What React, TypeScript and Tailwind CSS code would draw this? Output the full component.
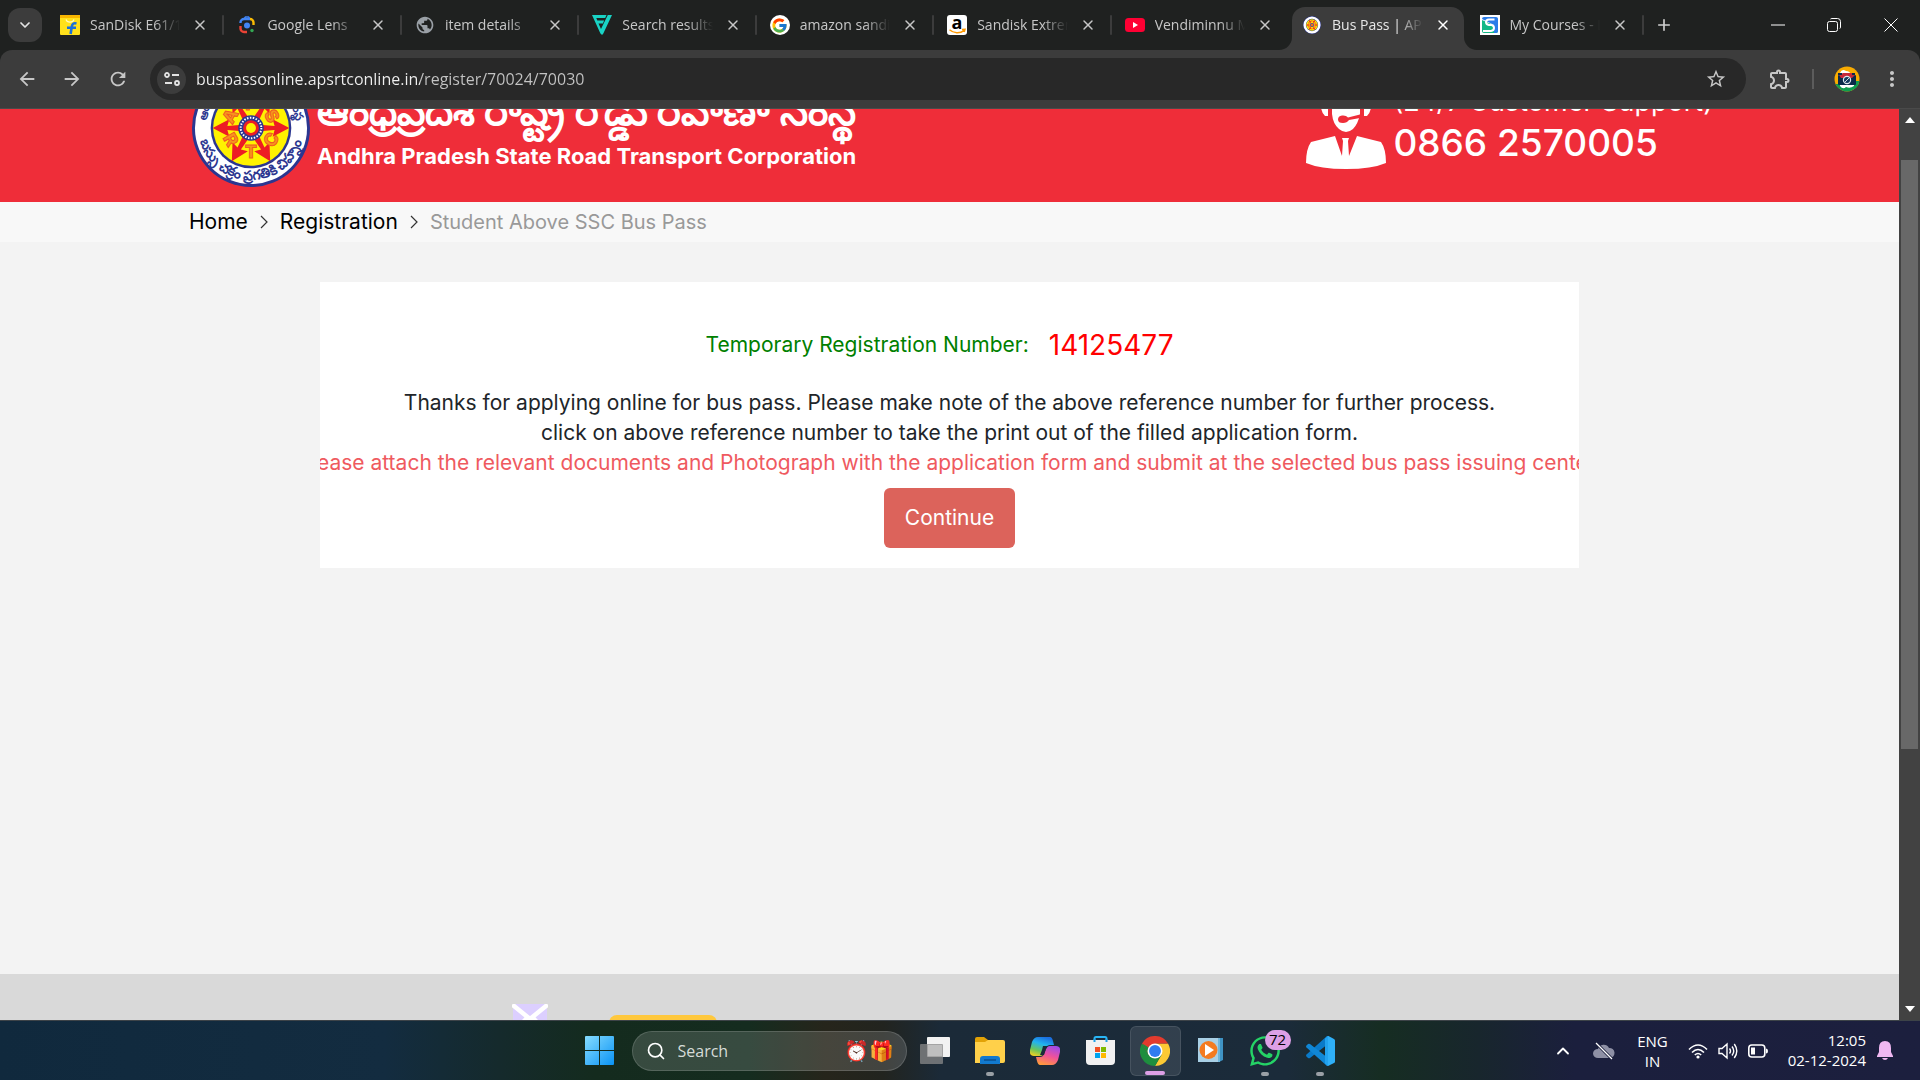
import React from "react";
import {
  MdArrowBack,
  MdArrowForward,
  MdRefresh,
  MdStarBorder,
  MdOutlineExtension,
  MdMoreVert,
  MdPublic,
} from "react-icons/md";
import { FcGoogle } from "react-icons/fc";
import { FaWhatsapp } from "react-icons/fa";
import { ChevronDown, ChevronUp, Plus, X, Search } from "lucide-react";

/* ---------- Emblem ---------- */

const SPOKES = [0, 60, 120, 180, 240, 300];
const LETTERS = [
  { ch: "A", angle: -60 },
  { ch: "P", angle: 0 },
  { ch: "S", angle: 60 },
  { ch: "C", angle: -60, flip: true },
  { ch: "T", angle: 0, flip: true },
  { ch: "R", angle: 60, flip: true },
];

function Emblem({ className, detailed }: { className: string; detailed?: boolean }) {
  return (
    <svg viewBox="0 0 120 120" className={className} aria-hidden="true">
      <circle cx="60" cy="60" r="60" fill="#2b3690" />
      <circle cx="60" cy="60" r="57" fill="#fff" />
      <circle cx="60" cy="60" r="41" fill="#2b3690" />
      <circle cx="60" cy="60" r="38.500" fill="#fff200" />
      {SPOKES.map((a) => (
        <path
          key={a}
          d="M60 56 L84 58 L82 51 L99 60 L82 69 L84 62 L60 64 Z"
          fill="#ed1c24"
          transform={`rotate(${a} 60 60)`}
        />
      ))}
      {LETTERS.map((l) => (
        <g key={l.ch} transform={`rotate(${l.angle} 60 60)`}>
          <text
            x="60"
            y={l.flip ? 90 : 42}
            textAnchor="middle"
            fontSize="18"
            fontWeight="800"
            fill="#f7941d"
            stroke="#f15a22"
            strokeWidth="1"
            className="font-['Inter',sans-serif]"
          >
            {l.ch}
          </text>
        </g>
      ))}
      <circle cx="60" cy="60" r="13" fill="#2b3690" />
      <circle cx="60" cy="60" r="10.500" fill="none" stroke="#fff" strokeWidth="2" strokeDasharray="1.500 1.500" />
      <circle cx="60" cy="60" r="8" fill="#ed1c24" />
      <circle cx="60" cy="60" r="5" fill="#fff200" />
      {detailed && (
        <>
          <path id="ringLower" d="M8 70A53 53 0 0 0 112 70" fill="none" />
          <text fontSize="14" fontWeight="700" fill="#2b3690">
            <textPath href="#ringLower" startOffset="50%" textAnchor="middle">
              బస్సు చక్రం ప్రగతికి చిహ్నం
            </textPath>
          </text>
          <path id="ringUpper" d="M14.500 66A46 46 0 1 1 105.500 66" fill="none" />
          <text fontSize="12" fontWeight="700" fill="#2b3690">
            <textPath href="#ringUpper" startOffset="50%" textAnchor="middle">
              ఆంధ్రప్రదేశ్ రోడ్డు రవాణా సంస్థ
            </textPath>
          </text>
        </>
      )}
    </svg>
  );
}

/* ---------- Favicons ---------- */

const FlipkartIcon = () => (
  <svg viewBox="0 0 20 20" className="size-5">
    <rect width="20" height="20" rx="1" fill="#ffe11b" />
    <rect width="20" height="3" fill="#f7b500" />
    <path d="M6 4.500c1 3.500 7 3.500 8 0" fill="none" stroke="#fff8c0" strokeWidth="1.200" />
    <path d="M16.500 8.500c-3-.8-4.300.4-4.700 3L10.600 19M7 12.800h9" fill="none" stroke="#1a6fdb" strokeWidth="2.600" />
  </svg>
);
const LensIcon = () => (
  <svg viewBox="0 0 20 20" className="size-5" fill="none" strokeWidth="2.400">
    <path d="M3.500 8V7.500A3.500 3.500 0 0 1 7 4h6" stroke="#4285f4" />
    <path d="M7 4l1.500-2h3L13 4" stroke="#4285f4" strokeWidth="1.600" />
    <path d="M13 4a3.500 3.500 0 0 1 3.500 3.500V10" stroke="#fbbc04" />
    <path d="M3.500 11v2.500A3.500 3.500 0 0 0 7 17h3" stroke="#ea4335" />
    <circle cx="10" cy="10.500" r="3" fill="#4285f4" />
    <circle cx="15" cy="15.500" r="1.700" fill="#34a853" />
  </svg>
);
const VIcon = () => (
  <svg viewBox="0 0 20 20" className="size-5" fill="#19d3c5">
    <path d="M0 0h14.500l-1.300 3H4.300l1 2.500h6.800L10.900 8.500H6.500L9 14 15.800 0H20L11.300 18.500Q10 21 8.300 18.300Z" />
  </svg>
);
const GoogleIcon = () => (
  <span className="flex size-5 items-center justify-center rounded-full bg-white">
    <FcGoogle className="size-[17px]" />
  </span>
);
const AmazonIcon = () => (
  <svg viewBox="0 0 20 20" className="size-5">
    <rect width="20" height="20" rx="3" fill="#fff" />
    <text x="10" y="13.500" textAnchor="middle" fontSize="18" fontWeight="700" fill="#000" className="font-['Open_Sans',sans-serif]">
      a
    </text>
    <path d="M2.500 14.800c4 3.600 10.500 3.700 14.500.8M15 14.500l3-.2-.8 2.700" fill="none" stroke="#ff9900" strokeWidth="1.500" />
  </svg>
);
const YoutubeIcon = () => (
  <svg viewBox="0 0 20 20" className="size-5">
    <rect y="3" width="20" height="14" rx="3.500" fill="#ff0033" />
    <path d="M8 7l5 3-5 3z" fill="#fff" />
  </svg>
);
const CoursesIcon = () => (
  <svg viewBox="0 0 20 20" className="size-5">
    <rect width="20" height="20" fill="#fff" />
    <path d="M2 4q0-2 2-2h12q2 0 2 2v8z" fill="#2b7de9" />
    <path d="M2 5v11q0 2 2 2h12q2 0 2-2v-4z" fill="#12b886" />
    <path d="M18 3v13q0 2-2 2h-2V9z" fill="#2b7de9" />
    <path d="M14.500 4.500H9q-3 0-3 2.500t3 3h2.500q2.500.5 2.500 3T11 16H3" fill="none" stroke="#fff" strokeWidth="2" />
  </svg>
);

type Tab = { title: string; icon: React.ReactNode; active?: boolean };

const TABS: Tab[] = [
  { title: "SanDisk E61/1050 MB/s", icon: <FlipkartIcon /> },
  { title: "Google Lens", icon: <LensIcon /> },
  { title: "item details", icon: <MdPublic className="size-5 text-[#9aa0a6]" /> },
  { title: "Search results for", icon: <VIcon /> },
  { title: "amazon sandisk", icon: <GoogleIcon /> },
  { title: "Sandisk Extreme", icon: <AmazonIcon /> },
  { title: "Vendiminnu Mabbulona", icon: <YoutubeIcon /> },
  { title: "Bus Pass | APSRTC", icon: <Emblem className="size-[18px]" />, active: true },
  { title: "My Courses - Learn", icon: <CoursesIcon /> },
];

function TabItem({ tab, beforeActive }: { tab: Tab; beforeActive: boolean }) {
  return (
    <div className="relative flex h-full min-w-0 flex-1 items-center pr-[14px] pl-[13px]">
      {tab.active && (
        <div className="absolute inset-x-0 top-[7px] bottom-0 mx-[3px] rounded-t-[13px] bg-[#3c3c3c]">
          <svg viewBox="0 0 13 13" className="absolute bottom-0 -left-[13px] size-[13px]" fill="#3c3c3c">
            <path d="M13 0V13H0A13 13 0 0 0 13 0Z" />
          </svg>
          <svg viewBox="0 0 13 13" className="absolute -right-[13px] bottom-0 size-[13px]" fill="#3c3c3c">
            <path d="M0 0V13H13A13 13 0 0 1 0 0Z" />
          </svg>
        </div>
      )}
      <button role="tab" aria-selected={!!tab.active} className="relative flex min-w-0 flex-1 items-center gap-[10px]">
        <span className="flex size-5 shrink-0 items-center justify-center">{tab.icon}</span>
        <span
          className={`min-w-0 flex-1 overflow-hidden [mask-image:linear-gradient(90deg,#000_70%,transparent_98%)] text-left text-sm whitespace-nowrap ${tab.active ? "text-[#e8e8e8]" : "text-[#c7c7c7]"}`}
        >
          {tab.title}
        </span>
      </button>
      <button
        aria-label={`Close ${tab.title}`}
        className={`relative ml-2 flex size-5 items-center justify-center ${tab.active ? "text-white" : "text-[#c7c7c7]"}`}
      >
        <X className="size-4" strokeWidth={2.2} />
      </button>
      {!tab.active && !beforeActive && <span className="absolute right-0 h-5 w-0.5 rounded bg-[#3c3c3c]" />}
    </div>
  );
}

function TabStrip() {
  return (
    <div className="flex h-[50px] bg-[#1f2120] pl-2">
      <button aria-label="Search tabs" className="mt-2 mr-[5px] flex size-[34px] shrink-0 items-center justify-center rounded-xl bg-[#3c3c3c] text-[#e3e3e3]">
        <ChevronDown className="size-4" strokeWidth={2.6} />
      </button>
      <div role="tablist" className="flex min-w-0 flex-1">
        {TABS.map((t, i) => (
          <TabItem key={t.title} tab={t} beforeActive={!!TABS[i + 1]?.active} />
        ))}
      </div>
      <button aria-label="New tab" className="flex w-10 shrink-0 items-center justify-center text-[#d0d0d0]">
        <Plus className="size-[18px]" strokeWidth={2.2} />
      </button>
      <div className="flex w-[236px] shrink-0 justify-end text-white">
        <button aria-label="Minimize" className="flex w-14 items-center justify-center">
          <svg viewBox="0 0 14 14" className="size-[14px]" stroke="currentColor"><path d="M0 7h14" /></svg>
        </button>
        <button aria-label="Restore" className="flex w-14 items-center justify-center">
          <svg viewBox="0 0 14 14" className="size-[14px]" fill="none" stroke="currentColor">
            <rect x=".5" y="3.500" width="10" height="10" rx="2" />
            <path d="M3.500 1Q4 .5 5 .5h5.500q3 0 3 3V9q0 1-.6 1.500" />
          </svg>
        </button>
        <button aria-label="Close window" className="flex w-[58px] items-center justify-center">
          <svg viewBox="0 0 14 14" className="size-[14px]" stroke="currentColor"><path d="M.5.5l13 13M13.500.5l-13 13" /></svg>
        </button>
      </div>
    </div>
  );
}

function Toolbar() {
  return (
    <div className="bg-[#1f2120]">
      <div className="flex h-[59px] items-center rounded-t-xl border-b border-[#4a4a4a] bg-[#3c3c3c] pl-4 text-[#c7c7c7]">
        <button aria-label="Back" className="mr-[23px]"><MdArrowBack className="size-[22px]" /></button>
        <button aria-label="Forward" className="mr-6"><MdArrowForward className="size-[22px]" /></button>
        <button aria-label="Reload" className="mr-[21px]"><MdRefresh className="size-[22px]" /></button>
        <div className="flex h-[42px] flex-1 items-center rounded-full bg-[#282828] pr-[19px] pl-[7px]">
          <button aria-label="View site information" className="flex size-[29px] items-center justify-center rounded-full bg-[#3c3c3c]">
            <svg viewBox="0 0 16 16" className="size-4" fill="none" stroke="#e3e3e3" strokeWidth="1.800">
              <circle cx="3" cy="4" r="2" />
              <path d="M8 4h7M1 12h7" />
              <circle cx="13" cy="12" r="2" />
            </svg>
          </button>
          <input
            aria-label="Address"
            readOnly
            value="buspassonline.apsrtconline.in/register/70024/70030"
            className="ml-[10px] min-w-0 flex-1 bg-[linear-gradient(90deg,#f0f0f0_224px,#c4c4c4_224px)] bg-clip-text text-base text-transparent outline-none"
          />
          <button aria-label="Bookmark this tab"><MdStarBorder className="size-[22px]" /></button>
        </div>
        <button aria-label="Extensions" className="ml-[22px]"><MdOutlineExtension className="size-6" /></button>
        <span className="ml-5 h-5 w-0.5 bg-[#5c5c5c]" />
        <button aria-label="Profile" className="ml-5">
          <svg viewBox="0 0 26 26" className="size-[26px]">
            <clipPath id="avatarClip"><circle cx="13" cy="13" r="12.500" /></clipPath>
            <g clipPath="url(#avatarClip)">
              <rect width="26" height="26" fill="#f9ab00" />
              <path d="M0 18h26v8H0z" fill="#0f9d4f" />
              <path d="M20 15h6v8h-6z" fill="#0f9d4f" />
              <path d="M6 7q2-5 6-2 4 0 5 4H5zM6 20q3 4 6 1 4 2 8-1v-3H6z" fill="#fff" />
              <rect x="4" y="9" width="18" height="10" rx="1" fill="#0b2a4a" />
              <path d="M9 7h9l3 2-3 3H7l-2-3z" fill="#c6283a" />
              <path d="M4 7h4v2H4zM18 7h3v2h-3z" fill="#0b2a4a" />
              <circle cx="13" cy="14" r="4.200" fill="#dfe6ee" />
              <circle cx="13" cy="14" r="3" fill="#12395f" />
              <path d="M11 16l4-4" stroke="#fff" strokeWidth=".8" />
            </g>
          </svg>
        </button>
        <button aria-label="Menu" className="mr-4 ml-5"><MdMoreVert className="size-6" /></button>
      </div>
    </div>
  );
}

/* ---------- Page ---------- */

const SupportAgent = () => (
  <svg viewBox="0 0 80 80" className="size-20" fill="#fff" aria-hidden="true">
    <path d="M15 8h7v19h-3q-4-4-4-10zM65 8h-7v19h3q4-4 4-10z" />
    <path d="M26 6h28v19q-2 10-7 15-7 6-14 0-6-5-7-15z" />
    <path d="M56 25L42 28.500Q40 26 36 26.500q-4 .5-4 4t5 3.500q4 0 6-3l11-2z" fill="#ef2d39" />
    <path d="M29 47L5 53Q0 60 0 74q14 6 40 6t40-6q0-14-5-21L51 47 43 67 42 52l1-3h-7l1 3-1 15z" />
  </svg>
);

function SiteHeader() {
  return (
    <header className="flex h-[93px] items-end justify-between overflow-hidden bg-[#ef2d39] pr-[186px] pb-[15px] pl-[192px] text-white">
      <div className="flex items-end">
        <Emblem className="size-[118px] shrink-0" detailed />
        <div className="mb-[18px] ml-[7px] whitespace-nowrap">
          <p className="mb-2 text-[40px]/[48px] font-bold">ఆంధ్రప్రదేశ్ రాష్ట్ర రోడ్డు రవాణా సంస్థ</p>
          <p className="text-[22px]/[26px] font-bold">Andhra Pradesh State Road Transport Corporation</p>
        </div>
      </div>
      <div className="mb-[18px] flex items-end">
        <SupportAgent />
        <div className="mb-1 ml-[7px] whitespace-nowrap">
          <p className="mb-1 text-[27px]/[30px]">(24/7 Customer Support)</p>
          <p className="text-[37px]/[44px] font-medium">0866 2570005</p>
        </div>
      </div>
    </header>
  );
}

const CrumbArrow = () => (
  <svg viewBox="0 0 8 14" className="mx-3 h-[14px] w-2" fill="none" stroke="#333" strokeWidth="1.200">
    <path d="M1 1l6 6-6 6" />
  </svg>
);

function Breadcrumb() {
  return (
    <nav aria-label="Breadcrumb" className="flex h-10 items-center bg-[#f8f8f8] pl-[189px] text-[21px] text-black">
      <a href="#home">Home</a>
      <CrumbArrow />
      <a href="#registration">Registration</a>
      <CrumbArrow />
      <span className="text-[20px] text-[#999]">Student Above SSC Bus Pass</span>
    </nav>
  );
}

function ConfirmationCard() {
  return (
    <section className="mx-auto mt-10 flex w-[1259px] max-w-full flex-col items-center bg-white pt-10 pb-5 text-[21px]/[30px] text-[#212529]">
      <p className="mr-5 mb-5 flex h-[46px] items-center gap-5">
        <span className="text-[#008000]">Temporary Registration Number:</span>
        <a href="#print" className="text-[28px] text-[#ff0000]">14125477</a>
      </p>
      <p>Thanks for applying online for bus pass. Please make note of the above reference number for further process.</p>
      <p>click on above reference number to take the print out of the filled application form.</p>
      <p className="flex w-full justify-center overflow-hidden whitespace-nowrap text-[#ef5a5f]">
        <span className="shrink-0">
          Please attach the relevant documents and Photograph with the application form and submit at the selected bus pass issuing center.
        </span>
      </p>
      <button className="mt-[10px] h-[60px] w-[131px] rounded-md bg-[#dc635b] text-white">Continue</button>
    </section>
  );
}

function PageFooter() {
  return (
    <footer className="flex h-[46px] items-start overflow-hidden bg-[#d9d9d9] pl-[512px]">
      <svg viewBox="0 0 36 30" className="mt-[30px] h-[30px] w-9 shrink-0">
        <path d="M1 0h34v30H1z" fill="#dccfff" />
        <path d="M2 2l16 13L34 2M2 28l12-13M34 28L22 15" stroke="#fff" strokeWidth="4.500" fill="none" strokeLinecap="round" />
      </svg>
      <div className="mt-[41px] ml-[61px] h-10 w-[108px] shrink-0 rounded-lg bg-[#ffc83d]" />
    </footer>
  );
}

function ScrollBar() {
  return (
    <div className="flex w-[21px] shrink-0 flex-col items-center bg-[#424242]">
      <svg viewBox="0 0 10 6" className="mt-2 mb-[37px] h-1.5 w-[10px]" fill="#fff"><path d="M5 0l5 6H0z" /></svg>
      <div className="w-[17px] flex-[589] bg-[#686868]" />
      <div className="flex-[257]" />
      <svg viewBox="0 0 10 6" className="mb-2 h-1.5 w-[10px]" fill="#fff"><path d="M5 6l5-6H0z" /></svg>
    </div>
  );
}

/* ---------- Taskbar icons ---------- */

const StartIcon = () => (
  <svg viewBox="0 0 29 29" className="size-[29px]">
    <linearGradient id="startFill" x1="0" y1="0" x2="1" y2="1" gradientUnits="objectBoundingBox">
      <stop offset="0" stopColor="#86dcff" />
      <stop offset="1" stopColor="#0a93f5" />
    </linearGradient>
    <path d="M1 0h13v14H0V1q0-1 1-1zM15 0h13q1 0 1 1v13H15zM0 15h14v14H1q-1 0-1-1zM15 15h14v13q0 1-1 1H15z" fill="url(#startFill)" />
  </svg>
);
const TaskViewIcon = () => (
  <svg viewBox="0 0 30 28" className="h-7 w-[30px]">
    <rect x="7" y="0" width="23" height="20" rx="1" fill="#f2f2f2" />
    <rect x="0" y="7" width="23" height="20" rx="1" fill="#8a8a8a" fillOpacity=".75" />
    <rect x="8" y="8" width="14" height="11" fill="#bfbfbf" />
  </svg>
);
const ExplorerIcon = () => (
  <svg viewBox="0 0 30 27" className="h-[27px] w-[30px]">
    <path d="M0 2q0-2 2-2h7l4 3v6H0z" fill="#e2a206" />
    <path d="M0 5h10l3-2h15q2 0 2 2v19q0 2-2 2H0z" fill="#ffd04a" />
    <path d="M5 27v-5q0-3 3-3h14q3 0 3 3v5z" fill="#1279cf" />
    <path d="M9 23h12" stroke="#0b4f8f" strokeWidth="1.500" />
  </svg>
);
const CopilotIcon = () => (
  <svg viewBox="0 0 30 28" className="h-7 w-[30px]">
    <defs>
      <linearGradient id="copA" x1="0.600" y1="0" x2="0.200" y2="1">
        <stop offset="0" stopColor="#1b6fe0" />
        <stop offset=".35" stopColor="#22b3f0" />
        <stop offset=".7" stopColor="#69c55c" />
        <stop offset="1" stopColor="#f2d122" />
      </linearGradient>
      <linearGradient id="copB" x1="0.700" y1="0" x2="0.300" y2="1">
        <stop offset="0" stopColor="#a04be8" />
        <stop offset=".5" stopColor="#f0529a" />
        <stop offset="1" stopColor="#ff9a3c" />
      </linearGradient>
    </defs>
    <path d="M17 0h3q2 0 3 4l1 4h-4q-3 0-4 3l-2 5q-1 3-4 3H4q-5 0-4-6l2-8q2-5 6-5z" fill="url(#copA)" />
    <path d="M13 28h-3q-2 0-3-4l-1-4h4q3 0 4-3l2-5q1-3 4-3h6q5 0 4 6l-2 8q-2 5-6 5z" fill="url(#copB)" />
    <path d="M13 9h5l-2 3-2 6h-4l2-5z" fill="#1b2a3a" />
  </svg>
);
const StoreIcon = () => (
  <svg viewBox="0 0 29 29" className="size-[29px]">
    <path d="M8.500 6V2.500q0-1.500 1.500-1.500h9q1.500 0 1.500 1.500V6" fill="none" stroke="#29b6f6" strokeWidth="2" />
    <path d="M0 4h29v21q0 4-4 4H4q-4 0-4-4z" fill="#f1f1f1" />
    <path d="M8.500 6V3M20.500 6V3" stroke="#1ea0e6" strokeWidth="2" />
    <path d="M9 11h5v5H9z" fill="#f25022" />
    <path d="M15 11h5v5h-5z" fill="#7fba00" />
    <path d="M9 17h5v5H9z" fill="#00a4ef" />
    <path d="M15 17h5v5h-5z" fill="#ffb900" />
  </svg>
);
const ChromeIcon = () => (
  <svg viewBox="0 0 48 48" className="size-[30px]">
    <path d="M24 12H44.800A24 24 0 0 1 24 48L34.400 30Z" fill="#fcc934" />
    <path d="M34.400 30L24 48A24 24 0 0 1 3.200 12L13.600 30Z" fill="#1e8e3e" />
    <path d="M24 12H44.800A24 24 0 0 0 3.200 12L13.600 30Z" fill="#e33b2e" />
    <path d="M3.200 12L13.600 30l10-6z" fill="#1e8e3e" />
    <circle cx="24" cy="24" r="12" fill="#fff" />
    <circle cx="24" cy="24" r="9.500" fill="#2f7cf0" />
  </svg>
);
const MediaIcon = () => (
  <svg viewBox="0 0 25 25" className="size-[25px]">
    <path d="M5 0h20v22l-4 2H5z" fill="#3f93c4" />
    <path d="M3 0h19v24H3z" fill="#6fb6dc" />
    <path d="M0 0h20v24H0z" fill="#a9d0e6" />
    <circle cx="10.500" cy="12" r="9" fill="#f47b20" />
    <path d="M7 6l9 6-9 6z" fill="#fff" />
  </svg>
);
const CodeIcon = () => (
  <svg viewBox="0 0 30 30" className="size-[30px]">
    <path d="M22 0L1.500 18.500q-1 1 0 2L3 22q1 .6 2 0L23 8z" fill="#0a7ac9" />
    <path d="M22 30L1.500 11.500q-1-1 0-2L3 8q1-.6 2 0L23 22z" fill="#1087d6" />
    <path d="M21.500 30q1.500-.5 1.500-2V2q0-1.500-1.500-2 1-.3 2 0L29 3q1 .6 1 1.500v21q0 1-1 1.500l-5.500 2.700q-1 .5-2 .3z" fill="#2fb0f8" />
    <path d="M20 2.500L23 0v30l-3-2.500z" fill="#22a2ee" />
  </svg>
);

const DOCK = [
  { name: "Task View", icon: <TaskViewIcon />, mark: "none" },
  { name: "File Explorer", icon: <ExplorerIcon />, mark: "open" },
  { name: "Copilot", icon: <CopilotIcon />, mark: "none" },
  { name: "Microsoft Store", icon: <StoreIcon />, mark: "none" },
  { name: "Google Chrome", icon: <ChromeIcon />, mark: "focus" },
  { name: "Media Player", icon: <MediaIcon />, mark: "none" },
  { name: "WhatsApp", icon: <FaWhatsapp className="size-[34px] text-[#25d366]" />, mark: "open", badge: "72" },
  { name: "Visual Studio Code", icon: <CodeIcon />, mark: "open" },
];

function DockItem({ name, icon, mark, badge }: { name: string; icon: React.ReactNode; mark: string; badge?: string }) {
  return (
    <button
      aria-label={name}
      className={`relative mx-[2px] flex h-[50px] w-[51px] items-center justify-center rounded-md ${mark === "focus" ? "border border-white/10 bg-white/10" : ""}`}
    >
      {icon}
      {badge && (
        <span className="absolute top-1 right-0 flex h-5 w-[26px] items-center justify-center rounded-full bg-[#dda0e6] text-[15px] text-black">
          {badge}
        </span>
      )}
      {mark === "open" && <span className="absolute bottom-0 h-1 w-2 rounded-full bg-[#9aa0a6]" />}
      {mark === "focus" && <span className="absolute bottom-0 h-1 w-5 rounded-full bg-[#dda0e6]" />}
    </button>
  );
}

function Taskbar() {
  return (
    <div className="flex h-[60px] items-center border-t border-[#3d4348] bg-[linear-gradient(90deg,#10293d_0%,#132c40_20%,#152a2c_26%,#142b1e_31%,#152c1f_39%,#26251b_43%,#22241f_46%,#1b2a38_49%,#1b2b3a_67%,#162d22_72%,#18262d_77%,#1b1f3d_82%,#1c1f3e_100%)] text-white">
      <div className="flex-1" />
      <div className="flex shrink-0 items-center">
        <button aria-label="Start" className="flex w-[54px] items-center justify-center"><StartIcon /></button>
        <label className="mr-px ml-[5px] flex h-10 w-[275px] items-center rounded-full border border-white/15 bg-white/15 pr-3 pl-[13px]">
          <Search className="size-5" strokeWidth={2} />
          <input
            type="search"
            aria-label="Search"
            placeholder="Search"
            className="ml-3 min-w-0 flex-1 text-base outline-none placeholder:text-[#d6dcd8]"
          />
          <span className="text-[20px]/6">⏰</span>
          <span className="text-[20px]/6">🎁</span>
        </label>
        {DOCK.map((d) => (
          <DockItem key={d.name} {...d} />
        ))}
      </div>
      <div className="flex flex-1 items-center justify-end text-[15px]/5 whitespace-nowrap">
        <button aria-label="Show hidden icons" className="mr-5"><ChevronUp className="size-5" strokeWidth={2.2} /></button>
        <svg viewBox="0 0 22 18" className="mr-[22px] h-[18px] w-[22px]">
          <path d="M5 16a5 4.500 0 0 1 0-9 6 6 0 0 1 11-1 5 5 0 0 1 1 10z" fill="#8e90a5" />
          <path d="M4 2l15 15" stroke="#1c1f3e" strokeWidth="3" />
          <path d="M3 1l16 16" stroke="#fff" strokeWidth="1.200" />
        </svg>
        <div className="mr-5 flex flex-col items-center">
          <span>ENG</span>
          <span>IN</span>
        </div>
        <svg viewBox="0 0 20 16" className="mr-[10px] h-4 w-5" fill="none" stroke="#fff" strokeWidth="1.600">
          <path d="M1 6.500q9-9 18 0M4 9.500q6-6 12 0M6.800 12q3.200-3 6.400 0" />
          <circle cx="10" cy="14" r="1.600" fill="#fff" stroke="none" />
        </svg>
        <svg viewBox="0 0 20 18" className="mr-[10px] h-[18px] w-5" fill="none" stroke="#fff" strokeWidth="1.400">
          <path d="M1 6.500h3L9 2v14l-5-4.500H1zM11.500 6.500q2 2.500 0 5M14 4.500q3.500 4.500 0 9M16.300 2q5 7 0 14" />
        </svg>
        <svg viewBox="0 0 20 14" className="mr-5 h-[14px] w-5">
          <rect x=".8" y="1" width="16" height="12" rx="3" fill="none" stroke="#fff" strokeWidth="1.600" />
          <rect x="3" y="3.500" width="4" height="7" fill="#fff" />
          <path d="M18 4.500q2 0 2 2.500t-2 2.500z" fill="#fff" />
        </svg>
        <div className="mr-[11px] mb-0.5 flex flex-col items-end">
          <span>12:05</span>
          <span>02-12-2024</span>
        </div>
        <svg viewBox="0 0 16 19" className="mr-[27px] h-[19px] w-4" fill="#f0b8f2">
          <path d="M8 0q6 0 6 7v4l2 4v1H0v-1l2-4V7q0-7 6-7zM5 17h6q-1 2-3 2t-3-2z" />
        </svg>
      </div>
    </div>
  );
}

export default function App() {
  return (
    <div className="flex min-h-screen flex-col overflow-hidden font-['Open_Sans','Noto_Sans',sans-serif]">
      <TabStrip />
      <Toolbar />
      <div className="flex flex-1">
        <div className="flex min-w-0 flex-1 flex-col bg-[#f3f3f3] font-['Inter',sans-serif]">
          <SiteHeader />
          <Breadcrumb />
          <main className="flex-1">
            <ConfirmationCard />
          </main>
          <PageFooter />
        </div>
        <ScrollBar />
      </div>
      <Taskbar />
    </div>
  );
}
